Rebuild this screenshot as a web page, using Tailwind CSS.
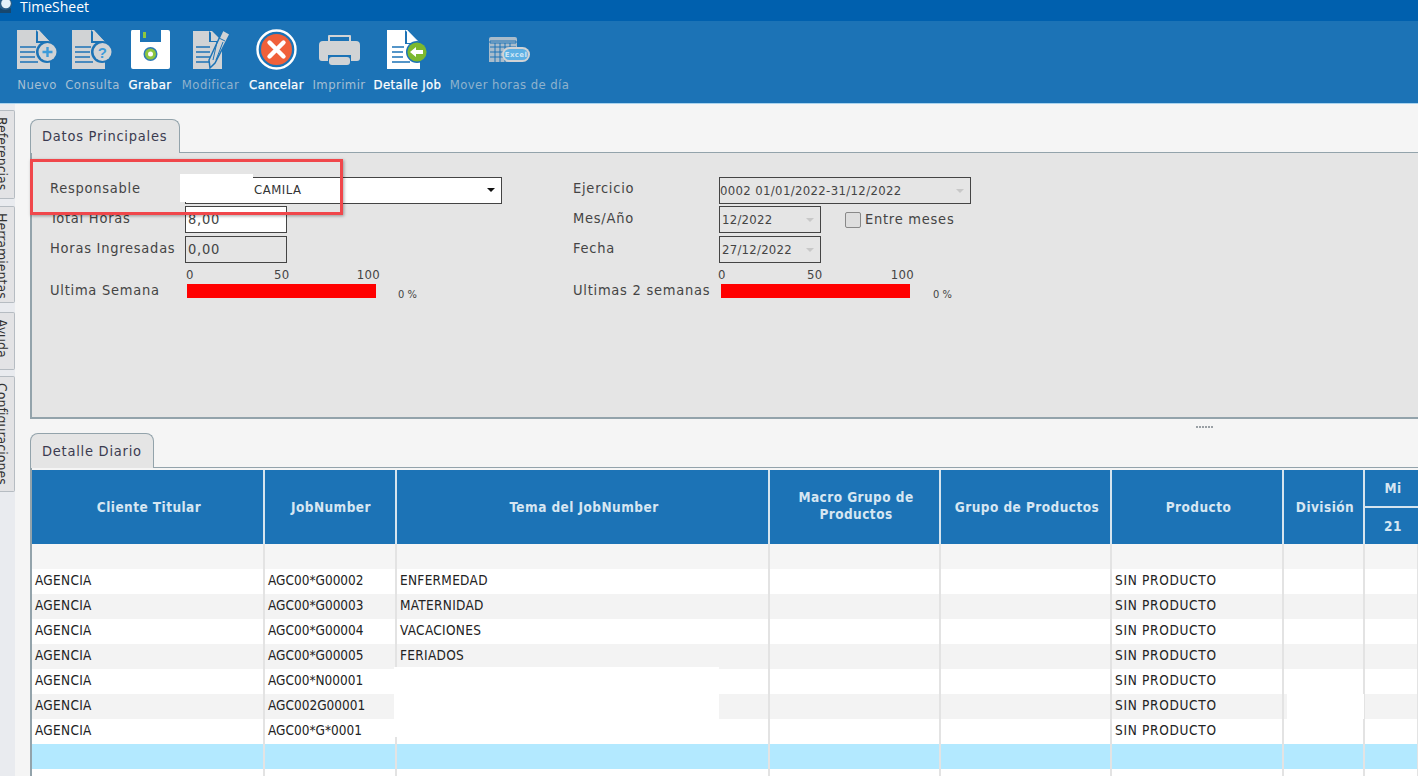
<!DOCTYPE html>
<html lang="es">
<head>
<meta charset="utf-8">
<title>TimeSheet</title>
<script src="https://cdn.jsdelivr.net/npm/@tailwindcss/browser@4"></script>
</head>
<body class="m-0 overflow-hidden bg-[#f5f5f5]">
<div class="relative flex h-[776px] w-[1418px] flex-col overflow-hidden bg-[#f5f5f5] font-['DejaVu_Sans_Condensed','DejaVu_Sans',sans-serif] text-[13px] text-[#333]">

  <!-- title bar -->
  <div class="flex h-[21px] shrink-0 items-start bg-[#0060ae] text-white">
    <svg class="h-[14px] w-[13px]" viewBox="0 0 13 14"><circle cx="5.5" cy="4" r="6.5" fill="#2b5d86"/><circle cx="6" cy="3.5" r="4.8" fill="#e6f2fa"/><path d="M0 8q5 4 11 0v5H0z" fill="#17476e"/></svg>
    <span class="ml-[7px] font-['Open_Sans',sans-serif] text-[14px] leading-[14px]">TimeSheet</span>
  </div>

  <!-- toolbar -->
  <div class="flex h-[83px] shrink-0 items-start gap-[9px] border-b border-[#a9d3ee] bg-[#1c73b6] pl-[17px] pt-[8px] tracking-[0.4px]">
    <div class="flex w-[40px] flex-col items-center text-[#a5bfd3]">
      <svg class="h-[41px] w-[41px]" viewBox="0 0 41 41">
        <path d="M0 1h22l11 12v27H0z" fill="#d1d3d5"/><path d="M19 1v13h14z" fill="#1c73b6"/><path d="M21 1l11 11H21z" fill="#d1d3d5"/>
        <path d="M3 18h16M3 23h15M3 28h15M3 33h18" stroke="#1c73b6" stroke-width="1.4"/>
        <circle cx="30" cy="23" r="11" fill="#1c73b6"/><circle cx="30.5" cy="23" r="9" fill="#d1d3d5"/>
        <path d="M30.5 18v10M25.5 23h10" stroke="#3d9bd9" stroke-width="2.4"/>
      </svg>
      <span class="mt-[5px] whitespace-nowrap">Nuevo</span>
    </div>
    <div class="flex w-[53px] flex-col items-center text-[#a5bfd3]">
      <svg class="h-[41px] w-[41px]" viewBox="0 0 41 41">
        <path d="M0 1h22l11 12v27H0z" fill="#d1d3d5"/><path d="M19 1v13h14z" fill="#1c73b6"/><path d="M21 1l11 11H21z" fill="#d1d3d5"/>
        <path d="M3 18h16M3 23h15M3 28h15M3 33h18" stroke="#1c73b6" stroke-width="1.4"/>
        <circle cx="30" cy="23" r="11" fill="#1c73b6"/><circle cx="30.5" cy="23" r="9" fill="#d1d3d5"/>
        <text x="30.5" y="28.5" text-anchor="middle" font-size="15" font-weight="700" fill="#3d9bd9" font-family="Liberation Sans">?</text>
      </svg>
      <span class="mt-[5px] whitespace-nowrap">Consulta</span>
    </div>
    <div class="flex w-[44px] flex-col items-center text-white [-webkit-text-stroke:0.25px_white]">
      <svg class="h-[41px] w-[41px]" viewBox="0 0 41 41">
        <path d="M2 1h8v11q0 1 1 1h19q1 0 1-1V1h7q2 0 2 2v35q0 2-2 2H3q-2 0-2-2V3q0-2 1-2z" fill="#fff"/>
        <rect x="10" y="1" width="21" height="12" fill="#1c73b6"/>
        <rect x="13" y="3" width="3" height="6" fill="#8dc63f"/>
        <circle cx="20.5" cy="25" r="7" fill="#2f79b5"/><circle cx="20.5" cy="25" r="5.5" fill="#8dc63f"/><circle cx="20.5" cy="25" r="2.5" fill="#fff"/>
      </svg>
      <span class="mt-[5px] whitespace-nowrap">Grabar</span>
    </div>
    <div class="flex w-[59px] flex-col items-center text-[#8fb2cd]">
      <svg class="h-[41px] w-[41px]" viewBox="0 0 41 41">
        <path d="M3 2h19l10 10v28H3z" fill="#d1d3d5"/><path d="M19 2v11h13z" fill="#1c73b6"/><path d="M21 2l10 10H21z" fill="#d1d3d5"/>
        <path d="M6 18h14M6 23h14M6 28h14M6 33h16" stroke="#1c73b6" stroke-width="1.4"/>
        <path d="M33 1l7 4-15 29-5 5-1-8z" fill="#d1d3d5" stroke="#1c73b6" stroke-width="1.5"/>
        <path d="M29 9l6 3M27 13l-4 18M33 13l-7 18" stroke="#1c73b6" stroke-width="1"/>
      </svg>
      <span class="mt-[5px] whitespace-nowrap">Modificar</span>
    </div>
    <div class="flex w-[55px] flex-col items-center text-white [-webkit-text-stroke:0.25px_white]">
      <svg class="h-[41px] w-[41px]" viewBox="0 0 41 41">
        <circle cx="20.5" cy="20.5" r="19" fill="none" stroke="#fff" stroke-width="2.4"/>
        <circle cx="20.5" cy="20.5" r="15.5" fill="#f0603a"/>
        <path d="M13.5 13.5l14 14M27.5 13.5l-14 14" stroke="#fff" stroke-width="4.4" stroke-linecap="round"/>
      </svg>
      <span class="mt-[5px] whitespace-nowrap">Cancelar</span>
    </div>
    <div class="flex w-[52px] flex-col items-center text-[#a5bfd3]">
      <svg class="h-[41px] w-[41px]" viewBox="0 0 41 41">
        <path d="M9 12V7q0-1 1-1h21q1 0 1 1v5h-2V8H11v4z" fill="#d1d3d5"/>
        <path d="M4 12h33q4 0 4 4v13q0 3-3 3h-6v-6H9v6H3q-3 0-3-3V16q0-4 4-4z" fill="#d1d3d5"/>
        <rect x="10" y="28" width="21" height="8" rx="3" fill="#d1d3d5"/>
      </svg>
      <span class="mt-[5px] whitespace-nowrap">Imprimir</span>
    </div>
    <div class="flex w-[67px] flex-col items-center text-white [-webkit-text-stroke:0.25px_white]">
      <svg class="h-[41px] w-[41px]" viewBox="0 0 41 41">
        <path d="M0 1h20l13 13v26H0z" fill="#fff"/><path d="M18 1v14h15z" fill="#1c73b6"/><path d="M20 1l12 13H20z" fill="#fff"/>
        <path d="M5 18h12M5 23h11M5 28h11M5 33h18" stroke="#1c73b6" stroke-width="1.4"/>
        <circle cx="30" cy="23" r="11" fill="#1c73b6"/><circle cx="30" cy="23" r="9.6" fill="#7cb82f"/>
        <path d="M23 23l6-5v3h7v4h-7v3z" fill="#fff"/>
      </svg>
      <span class="mt-[5px] whitespace-nowrap">Detalle Job</span>
    </div>
    <div class="flex w-[119px] flex-col items-center text-[#8fb2cd]">
      <svg class="h-[41px] w-[41px]" viewBox="0 0 41 41">
        <path d="M0 10q0-2 2-2h24q2 0 2 2v23H0z" fill="#a9bccb"/>
        <path d="M1 12h26v2H1zM1 18h26M1 23h26M1 28h26M6 14v19M11 14v19M16 14v19M21 14v19" stroke="#1c73b6" stroke-width="1" fill="none"/>
        <rect x="13" y="18" width="28" height="15" rx="7.5" fill="#d1d3d5"/>
        <rect x="15" y="20" width="24" height="11" rx="5.5" fill="#5db0e4"/>
        <text x="27" y="28" text-anchor="middle" font-size="7" font-weight="700" fill="#cfe6f5" font-family="DejaVu Sans">Excel</text>
      </svg>
      <span class="mt-[5px] whitespace-nowrap">Mover horas de día</span>
    </div>
  </div>

  <!-- body -->
  <div class="flex min-h-0 flex-1">
    <!-- side tabs -->
    <div class="flex w-[15px] shrink-0 flex-col items-stretch gap-[7px] overflow-hidden bg-[#e9ebef] pt-[6px] text-[14px] text-[#333]">
      <div class="flex h-[89px] shrink-0 justify-end overflow-hidden rounded-r-[2px] border border-l-0 border-[#b6bcc2] bg-[#e3e3e5] pt-[6px]"><span class="mr-[2px] w-[20px] whitespace-nowrap leading-[20px] [writing-mode:vertical-rl]">Referencias</span></div>
      <div class="flex h-[97px] shrink-0 justify-end overflow-hidden rounded-r-[2px] border border-l-0 border-[#b6bcc2] bg-[#e3e3e5] pt-[6px]"><span class="mr-[2px] w-[20px] whitespace-nowrap leading-[20px] [writing-mode:vertical-rl]">Herramientas</span></div>
      <div class="mt-[2px] flex h-[58px] shrink-0 justify-end overflow-hidden rounded-r-[2px] border border-l-0 border-[#b6bcc2] bg-[#e3e3e5] pt-[6px]"><span class="mr-[2px] w-[20px] whitespace-nowrap leading-[20px] [writing-mode:vertical-rl]">Ayuda</span></div>
      <div class="-mt-[1px] flex h-[116px] shrink-0 justify-end overflow-hidden rounded-r-[2px] border border-l-0 border-[#b6bcc2] bg-[#e3e3e5] pt-[6px]"><span class="mr-[2px] w-[20px] whitespace-nowrap leading-[20px] [writing-mode:vertical-rl]">Configuraciones</span></div>
    </div>

    <!-- main -->
    <div class="flex min-w-0 flex-1 flex-col pl-[15px] pt-[15px]">
      <!-- tab 1 -->
      <div class="relative z-10 -mb-[1px] flex h-[34px] w-[150px] shrink-0 items-center rounded-t-[8px] border border-b-0 border-[#93a3ab] bg-[#e5e5e5] pl-[11px] pt-[1px] text-[14.5px] tracking-[0.75px] text-[#3b3b50]">Datos Principales</div>
      <!-- panel 1 -->
      <div class="h-[267px] shrink-0 border-y-2 border-l-2 border-t-[1px] border-[#93a3ab] bg-[#e5e5e5] pl-[18px] pt-[24px] text-[14.5px] tracking-[0.75px] text-[#444]">
        <div class="grid grid-cols-[135px_388px_146px_1fr]">
          <div class="flex h-[29px] items-start pt-[1px]">Responsable</div>
          <div class="h-[29px]"><div class="relative h-[27px] w-[317px] border border-[#444] bg-white"><span class="absolute right-[6px] top-[10px] h-0 w-0 border-x-[4px] border-t-[4px] border-x-transparent border-t-[#111]"></span></div></div>
          <div class="flex h-[29px] items-start pt-[1px]">Ejercicio</div>
          <div class="h-[29px]"><div class="relative flex h-[27px] w-[252px] items-center border border-[#444] bg-[#e5e5e5] text-[13px] tracking-[0.35px]">0002 01/01/2022-31/12/2022<span class="absolute right-[6px] top-[11px] h-0 w-0 border-x-[4px] border-t-[4px] border-x-transparent border-t-[#c8c8c8]"></span></div></div>

          <div class="flex h-[30px] items-start pt-[2px]">Total Horas</div>
          <div class="h-[30px]"><div class="flex h-[27px] w-[102px] items-center border border-[#444] bg-white pl-[2px] pt-[1px]">8,00</div></div>
          <div class="flex h-[30px] items-start pt-[2px]">Mes/Año</div>
          <div class="flex h-[30px] items-start gap-[24px]">
            <div class="relative flex h-[27px] w-[102px] items-center border border-[#444] pl-[2px] text-[13px] tracking-[0.25px]">12/2022<span class="absolute right-[6px] top-[11px] h-0 w-0 border-x-[4px] border-t-[4px] border-x-transparent border-t-[#c8c8c8]"></span></div>
            <div class="flex items-center gap-[4px] pt-[3px]"><span class="h-[16px] w-[16px] rounded-[2px] border border-[#888] bg-[#dedede]"></span><span>Entre meses</span></div>
          </div>

          <div class="flex h-[30px] items-start pt-[2px]">Horas Ingresadas</div>
          <div class="h-[30px]"><div class="flex h-[27px] w-[102px] items-center border border-[#444] pl-[2px] pt-[1px]">0,00</div></div>
          <div class="flex h-[30px] items-start pt-[2px]">Fecha</div>
          <div class="h-[30px]"><div class="relative flex h-[27px] w-[102px] items-center border border-[#444] pl-[2px] text-[13px] tracking-[0.25px]">27/12/2022<span class="absolute right-[6px] top-[11px] h-0 w-0 border-x-[4px] border-t-[4px] border-x-transparent border-t-[#c8c8c8]"></span></div></div>

          <div class="flex h-[36px] items-end">Ultima Semana</div>
          <div class="flex h-[36px] items-start pl-[2px] pt-[1px]">
            <div class="w-[189px]">
              <div class="flex h-[15px] justify-between text-[13px] leading-[15px] tracking-[0.3px]"><span class="-ml-[1px]">0</span><span class="-mr-[4px] ml-[9px]">50</span><span class="-mr-[4px]">100</span></div>
              <div class="mt-[2px] h-[14px] bg-[#ff0000]"></div>
            </div>
            <span class="ml-[22px] mt-[21px] text-[11px] leading-[14px] tracking-normal">0 %</span>
          </div>
          <div class="flex h-[36px] items-end">Ultimas 2 semanas</div>
          <div class="flex h-[36px] items-start pl-[2px] pt-[1px]">
            <div class="w-[189px]">
              <div class="flex h-[15px] justify-between text-[13px] leading-[15px] tracking-[0.3px]"><span class="-ml-[3px]">0</span><span class="-mr-[4px] ml-[9px]">50</span><span class="-mr-[4px]">100</span></div>
              <div class="mt-[2px] h-[14px] bg-[#ff0000]"></div>
            </div>
            <span class="ml-[23px] mt-[21px] text-[11px] leading-[14px] tracking-normal">0 %</span>
          </div>
        </div>
      </div>

      <!-- splitter -->
      <div class="flex h-[14px] shrink-0 justify-end pr-[205px] pt-[7px]">
        <div class="h-[2px] w-[17px] bg-[repeating-linear-gradient(90deg,#9aa0a5_0_2px,transparent_2px_3px)]"></div>
      </div>

      <!-- tab 2 -->
      <div class="relative z-10 -mb-[1px] flex h-[35px] w-[124px] shrink-0 items-center rounded-t-[8px] border border-b-0 border-[#93a3ab] bg-[#e5e5e5] pl-[11px] pt-[1px] text-[14.5px] tracking-[0.75px] text-[#3b3b50]">Detalle Diario</div>

      <!-- panel 2 -->
      <div class="min-h-0 flex-1 overflow-hidden border-l-2 border-t-[1px] border-[#93a3ab] pt-[2px] text-[13.5px] tracking-[0.3px]">
        <table class="w-[1386px] table-fixed border-collapse text-[#222]">
          <colgroup><col class="w-[232px]"><col class="w-[132px]"><col class="w-[373px]"><col class="w-[171px]"><col class="w-[171px]"><col class="w-[172px]"><col class="w-[81px]"><col class="w-[54px]"></colgroup>
          <thead class="bg-[#1c73b6] text-[13.5px] font-semibold tracking-[0.45px] text-[#d6e6f2]">
            <tr class="h-[37px]">
              <th rowspan="2" class="border-r-2 border-[#d5e4ee] pl-[3px] pt-[1px]">Cliente Titular</th>
              <th rowspan="2" class="border-r-2 border-[#d5e4ee] pl-[2px] pt-[1px]">JobNumber</th>
              <th rowspan="2" class="border-r-2 border-[#d5e4ee] pl-[3px] pt-[1px]">Tema del JobNumber</th>
              <th rowspan="2" class="border-r-2 border-[#d5e4ee] pl-[3px] pb-[3px] leading-[17px]">Macro Grupo de<br>Productos</th>
              <th rowspan="2" class="border-r-2 border-[#d5e4ee] pl-[3px] pt-[1px]">Grupo de Productos</th>
              <th rowspan="2" class="border-r-2 border-[#d5e4ee] pl-[3px] pt-[1px]">Producto</th>
              <th rowspan="2" class="border-r-2 border-[#d5e4ee] pl-[3px] pt-[1px]">División</th>
              <th class="border-b-2 border-[#d5e4ee] pl-[3px] pt-[1px]">Mi</th>
            </tr>
            <tr class="h-[37px]"><th class="pl-[3px] pt-[1px]">21</th></tr>
          </thead>
          <tbody class="[&_td]:h-[25px] [&_td]:border-r-2 [&_td]:border-[#e3e3e3] [&_td]:p-0 [&_td]:pb-[2px] [&_td]:pl-[3px] [&_td]:whitespace-nowrap">
            <tr class="bg-[#f5f5f5]"><td></td><td></td><td></td><td></td><td></td><td></td><td></td><td></td></tr>
            <tr class="bg-white"><td>AGENCIA</td><td class="tracking-normal">AGC00*G00002</td><td>ENFERMEDAD</td><td></td><td></td><td class="tracking-[0.7px]">SIN PRODUCTO</td><td></td><td></td></tr>
            <tr class="bg-[#f3f3f3]"><td>AGENCIA</td><td class="tracking-normal">AGC00*G00003</td><td>MATERNIDAD</td><td></td><td></td><td class="tracking-[0.7px]">SIN PRODUCTO</td><td></td><td></td></tr>
            <tr class="bg-white"><td>AGENCIA</td><td class="tracking-normal">AGC00*G00004</td><td>VACACIONES</td><td></td><td></td><td class="tracking-[0.7px]">SIN PRODUCTO</td><td></td><td></td></tr>
            <tr class="bg-[#f3f3f3]"><td>AGENCIA</td><td class="tracking-normal">AGC00*G00005</td><td>FERIADOS</td><td></td><td></td><td class="tracking-[0.7px]">SIN PRODUCTO</td><td></td><td></td></tr>
            <tr class="bg-white"><td>AGENCIA</td><td class="tracking-normal">AGC00*N00001</td><td></td><td></td><td></td><td class="tracking-[0.7px]">SIN PRODUCTO</td><td></td><td></td></tr>
            <tr class="bg-[#f3f3f3]"><td>AGENCIA</td><td class="tracking-normal">AGC002G00001</td><td></td><td></td><td></td><td class="tracking-[0.7px]">SIN PRODUCTO</td><td></td><td></td></tr>
            <tr class="bg-white"><td>AGENCIA</td><td class="tracking-normal">AGC00*G*0001</td><td></td><td></td><td></td><td class="tracking-[0.7px]">SIN PRODUCTO</td><td></td><td></td></tr>
            <tr class="bg-[#b3e9ff]"><td></td><td></td><td></td><td></td><td></td><td></td><td></td><td></td></tr>
            <tr class="bg-white"><td></td><td></td><td></td><td></td><td></td><td></td><td></td><td></td></tr>
          </tbody>
        </table>
      </div>
    </div>
  </div>

  <!-- overlays: redactions and highlight box -->
  <div class="absolute left-[394px] top-[667px] h-[70px] w-[325px] bg-white"></div>
  <div class="absolute left-[1287px] top-[694px] h-[25px] w-[77px] bg-white"></div>
  <div class="absolute left-[180px] top-[174px] h-[28px] w-[73px] bg-white"></div>
  <div class="absolute left-[180px] top-[178px] h-[24px] w-[155px] bg-white"></div>
  <span class="absolute left-[254px] top-[182px] text-[13px] leading-[16px] tracking-[0.5px] text-[#333]">CAMILA</span>
  <div class="absolute left-[30px] top-[159px] h-[56px] w-[313px] border-[3px] border-[#f0474b] shadow-[1px_1px_3px_rgba(0,0,0,0.35)]"></div>
</div>
</body>
</html>
